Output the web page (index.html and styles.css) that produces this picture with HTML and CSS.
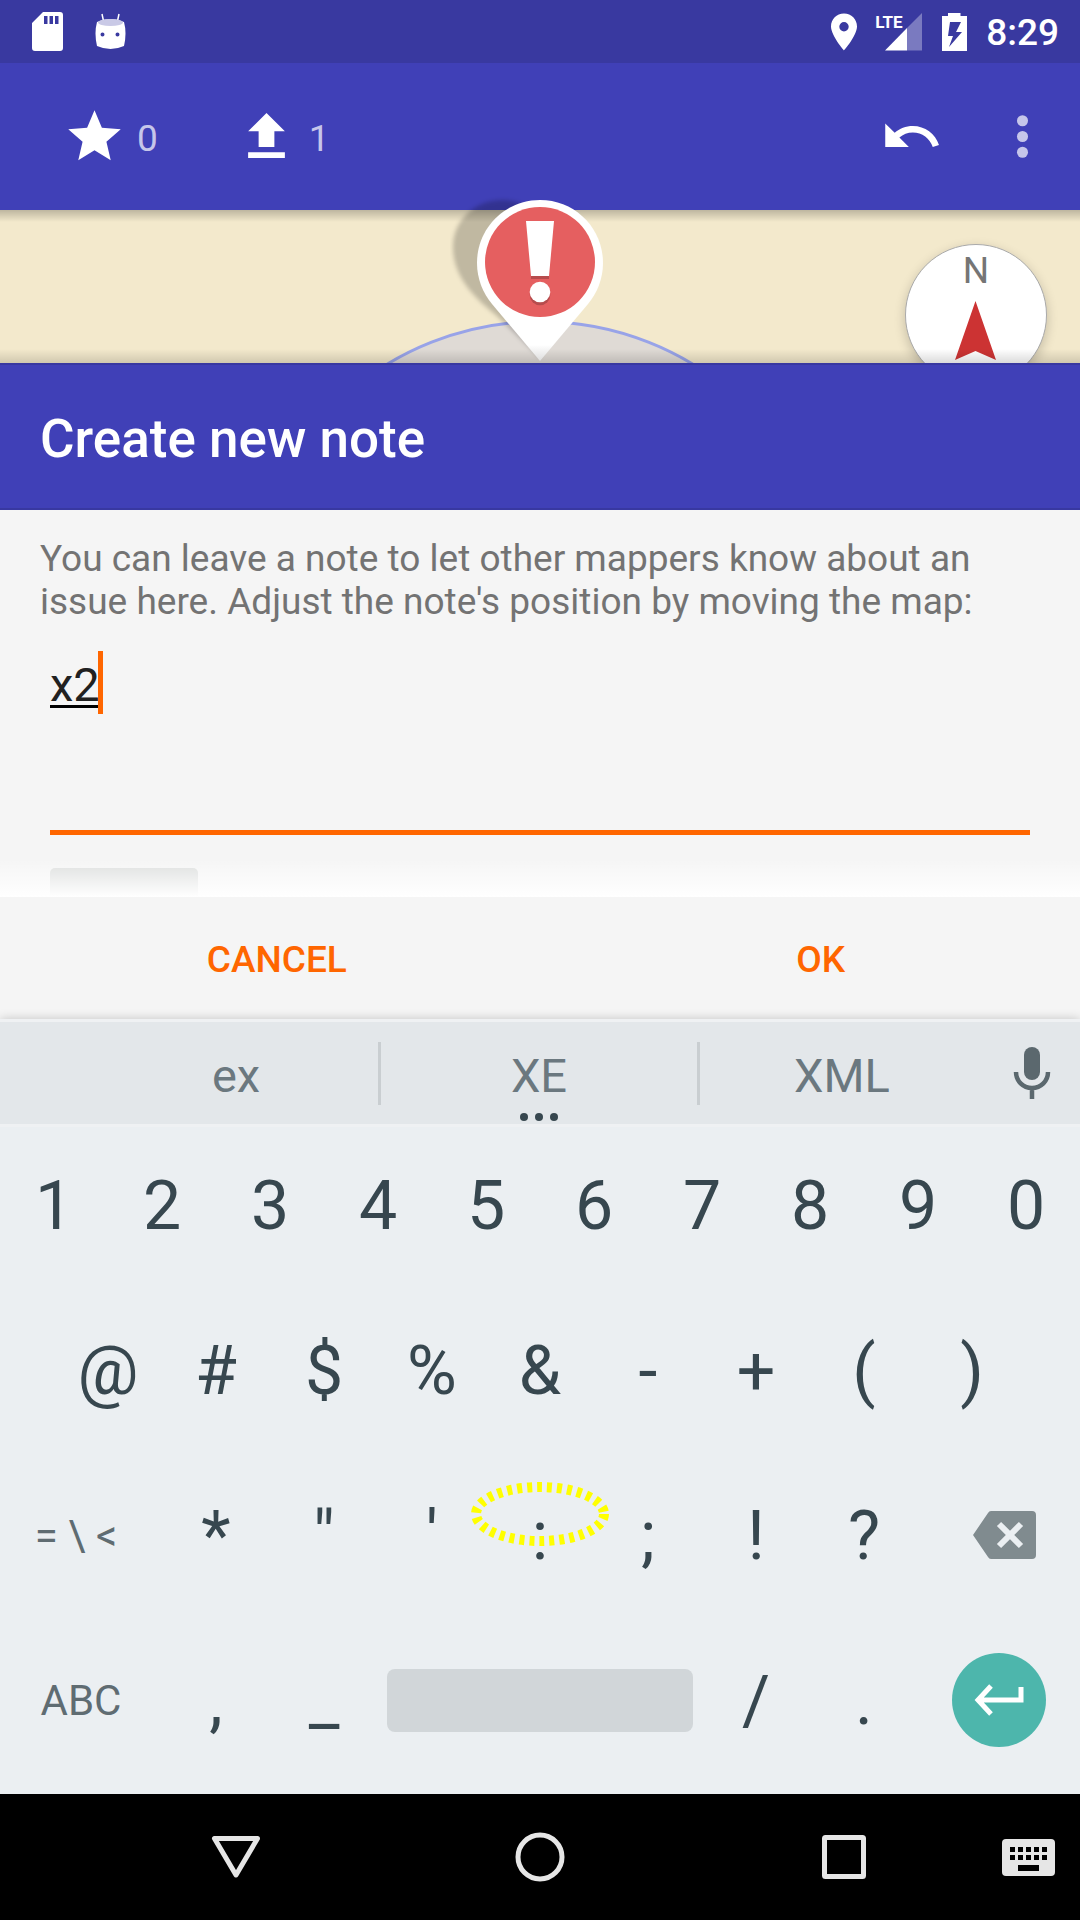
FILE: index.html
```html
<!DOCTYPE html>
<html lang="en">
<head>
<meta charset="utf-8">
<meta name="viewport" content="width=device-width, initial-scale=1">
<title>Create new note</title>
<link rel="stylesheet" href="styles.css">
</head>
<body>
<div class="screen">
  <header class="status">
    <div class="status-side">
      <svg viewBox="0 0 31 39" width="31" height="39" aria-hidden="true"><path fill="#fff" fill-rule="evenodd" d="M11 0h17q3 0 3 3v33q0 3-3 3H3q-3 0-3-3V11zM12 4v8h3.500V4zM17.500 4v8h3.500V4zM23 4v8h3.500V4z"/></svg>
      <svg viewBox="0 0 31 37" width="31" height="37" aria-hidden="true"><path stroke="#fff" stroke-width="1.500" d="M7 1l1.500 7M24 1l-1.500 7"/><path fill="#fff" fill-rule="evenodd" d="M2 9q13.500-6 27 0 3 11 0 24-13.500 6-27 0-3-13 0-24zM7.500 19.500a2 2 0 1 0 0 4 2 2 0 0 0 0-4zM22.500 19.500a2 2 0 1 0 0 4 2 2 0 0 0 0-4z"/><ellipse cx="15.500" cy="9.500" rx="12.500" ry="3.500" fill="#c9c9e6"/></svg>
    </div>
    <div class="status-side status-right">
      <svg viewBox="0 0 26 38" width="26" height="38" aria-hidden="true"><path fill="#fff" fill-rule="evenodd" d="M13 .5C5.500.5 0 6.200 0 13.500 0 22.500 13 37.500 13 37.500s13-15 13-24C26 6.200 20.500.5 13 .5zM13 9a4.700 4.700 0 1 1 0 9.400A4.700 4.700 0 0 1 13 9z"/></svg>
      <span class="network"><svg viewBox="0 0 46 38" width="46" height="38" aria-hidden="true"><path fill="#7a7ac0" d="M46 0v37.500H31V15z"/><path fill="#fff" d="M31 15v22.500H9z"/></svg><span class="lte">LTE</span></span>
      <svg viewBox="0 0 25 38" width="25" height="38" aria-hidden="true"><path fill="#fff" fill-rule="evenodd" d="M6 0h12.500v3H25v35H0V3h6zM8 9L6 23h5L7 34l13-15h-6l5-10z"/></svg>
      <time class="clock">8:29</time>
    </div>
  </header>

  <nav class="appbar" aria-label="App">
    <button class="counter" aria-label="Solved quests"><svg viewBox="0 0 24 24" class="icon" aria-hidden="true"><path d="M12 17.270L18.180 21l-1.640-7.030L22 9.240l-7.190-.61L12 2 9.190 8.630 2 9.240l5.460 4.730L5.820 21z"/></svg><span class="count">0</span></button>
    <button class="counter" aria-label="Upload"><svg viewBox="0 0 24 24" class="icon" aria-hidden="true"><path d="M9 16h6v-6h4l-7-7-7 7h4zM5 18h14v2.200H5z"/></svg><span class="count">1</span></button>
    <span class="spacer"></span>
    <button class="tool" aria-label="Undo"><svg viewBox="0 0 24 24" class="icon" aria-hidden="true"><path d="M12.500 8c-2.650 0-5.050.99-6.900 2.600L2 7v9h9l-3.620-3.620c1.390-1.160 3.160-1.880 5.120-1.880 3.540 0 6.550 2.310 7.600 5.500l2.370-.78C21.080 11.030 17.150 8 12.500 8z"/></svg></button>
    <button class="tool" aria-label="More options"><svg viewBox="0 0 24 24" class="icon icon-dim" aria-hidden="true"><circle cx="12" cy="6" r="2.100"/><circle cx="12" cy="12" r="2.100"/><circle cx="12" cy="18" r="2.100"/></svg></button>
  </nav>

  <main>
    <section class="map" aria-label="Map">
      <div class="map-view">
        <div class="accuracy"></div>
        <button class="compass" aria-label="Compass"><span class="north">N</span><svg viewBox="0 0 42 59" width="42" height="59" aria-hidden="true"><path fill="#c33" d="M20.500 0L41 59l-20.500-9L0 59z"/></svg></button>
      </div>
      <svg class="pin" viewBox="0 0 180 170" width="180" height="170" aria-hidden="true">
        <defs>
          <filter id="soft" x="-20%" y="-20%" width="140%" height="140%"><feGaussianBlur stdDeviation="2"/></filter>
          <linearGradient id="tip" x1="0" y1="0" x2="0" y2="1"><stop offset=".9" stop-color="#fff"/><stop offset="1" stop-color="#ddd"/></linearGradient>
        </defs>
        <path filter="url(#soft)" fill="#000" fill-opacity=".21" d="M52 5C25 5 3 25 3 52c0 31 23 52 43 68l44 43 10-100C99 30 84 5 52 5z"/>
        <path fill="url(#tip)" d="M90 5c-35 0-63 28-63 63 0 16 6 30 15 41l48 57 48-57c9-11 15-25 15-41 0-35-28-63-63-63z"/>
        <circle cx="90" cy="67" r="55" fill="#e55f60"/>
        <path fill="#b74c4d" d="M81 78h18v6H81z"/><circle cx="90" cy="100" r="10.300" fill="#b74c4d"/>
        <path fill="#fff" d="M76 26h28l-5 55H81z"/><circle cx="90" cy="97" r="10.300" fill="#fff"/>
      </svg>
    </section>

    <form class="dialog">
      <h1 class="title">Create new note</h1>
      <div class="content">
        <label class="message" for="note">You can leave a note to let other mappers know about an issue here. Adjust the note's position by moving the map:</label>
        <div class="field">
          <textarea class="note" id="note" spellcheck="false">x2</textarea>
          <span class="caret"></span>
        </div>
        <button class="attach" type="button" aria-label="Add photo"></button>
        <div class="fade"></div>
      </div>
      <div class="actions">
        <button class="action cancel" type="button">CANCEL</button>
        <button class="action" type="button">OK</button>
      </div>
    </form>
  </main>

  <section class="keyboard" aria-label="Keyboard">
    <div class="suggestions">
      <button class="word">ex</button>
      <button class="word word-main">XE<svg class="more" viewBox="0 0 40 8" width="40" height="8" aria-hidden="true"><circle cx="5" cy="4" r="4"/><circle cx="20" cy="4" r="4"/><circle cx="35" cy="4" r="4"/></svg></button>
      <button class="word">XML</button>
      <button class="mic" aria-label="Voice input"><svg viewBox="0 0 38 52" width="38" height="52" aria-hidden="true"><rect x="11" y="0" width="16" height="33" rx="8" fill="#5b686e"/><path fill="none" stroke="#5b686e" stroke-width="4.500" d="M3 25c0 9 7 16 16 16s16-7 16-16M19 41v11"/></svg></button>
    </div>
    <div class="keys">
      <div class="row">
        <button class="key">1</button><button class="key">2</button><button class="key">3</button><button class="key">4</button><button class="key">5</button><button class="key">6</button><button class="key">7</button><button class="key">8</button><button class="key">9</button><button class="key">0</button>
      </div>
      <div class="row">
        <button class="key key-inset">@</button><button class="key">#</button><button class="key">$</button><button class="key">%</button><button class="key">&amp;</button><button class="key">-</button><button class="key">+</button><button class="key">(</button><button class="key">)</button>
      </div>
      <div class="row">
        <button class="key key-wide key-symbols">= \ &lt;</button><button class="key">*</button><button class="key">"</button><button class="key">'</button><button class="key key-marked">:<svg class="marker" viewBox="0 0 140 64" width="140" height="64" aria-hidden="true"><ellipse cx="70" cy="32" rx="64" ry="27" fill="none" stroke="#ff0" stroke-width="10" stroke-dasharray="5 5"/></svg></button><button class="key">;</button><button class="key">!</button><button class="key">?</button>
        <button class="key key-wide key-delete" aria-label="Delete"><svg viewBox="0 0 63 48" width="63" height="48" aria-hidden="true"><path fill="#808b8f" d="M18 0h41q4 0 4 4v40q0 4-4 4H18q-2 0-3-2L0 24 15 2q1-2 3-2z"/><path stroke="#ebeff2" stroke-width="6" d="M26 13l22 22M48 13L26 35"/></svg></button>
      </div>
      <div class="row">
        <button class="key key-wide key-abc">ABC</button><button class="key">,</button><button class="key">_</button><button class="key key-space" aria-label="Space"><span class="bar"></span></button><button class="key">/</button><button class="key">.</button>
        <button class="key key-wide key-enter" aria-label="Enter"><span class="enter"><svg viewBox="0 0 50 32" width="50" height="32" aria-hidden="true"><path fill="none" stroke="#fff" stroke-width="5" d="M17 2L4 16l13 14M4 16h43V3"/></svg></span></button>
      </div>
    </div>
  </section>

  <nav class="system" aria-label="System">
    <button class="sys" aria-label="Back"><svg viewBox="0 0 50 44" width="50" height="44" aria-hidden="true"><path fill="none" stroke="#e6e6e6" stroke-width="5" stroke-linejoin="round" d="M3.500 3.500h43L25 40z"/></svg></button>
    <button class="sys" aria-label="Home"><svg viewBox="0 0 50 50" width="50" height="50" aria-hidden="true"><circle cx="25" cy="25" r="22" fill="none" stroke="#e6e6e6" stroke-width="5"/></svg></button>
    <button class="sys" aria-label="Recent apps"><svg viewBox="0 0 44 44" width="44" height="44" aria-hidden="true"><rect x="2.500" y="2.500" width="39" height="39" rx="1" fill="none" stroke="#e6e6e6" stroke-width="5"/></svg></button>
    <button class="sys sys-ime" aria-label="Choose keyboard"><svg viewBox="0 0 53 37" width="53" height="37" aria-hidden="true"><rect width="53" height="37" rx="4" fill="#e6e6e6"/><path stroke="#000" stroke-width="5" stroke-dasharray="5 3" d="M8 10.500h37.500M8 18.500h37.500"/><path fill="#000" d="M16 26h21v6H16z"/></svg></button>
  </nav>
</div>
</body>
</html>
```

FILE: styles.css
```css
* {
  box-sizing: border-box;
}

body {
  margin: 0;
  background: #000;
  font-family: Roboto, "Noto Sans", sans-serif;
  font-size: 37px;
}

button {
  display: flex;
  align-items: center;
  justify-content: center;
  margin: 0;
  padding: 0;
  border: 0;
  background: none;
  color: inherit;
  font: inherit;
}

svg {
  display: block;
  flex: none;
}

.screen {
  display: flex;
  flex-direction: column;
  min-height: 100vh;
  overflow: hidden;
}

/* Status bar */

.status {
  display: flex;
  justify-content: space-between;
  height: 63px;
  padding: 0 21px 0 32px;
  background: #3939a0;
  color: #fff;
}

.status-side {
  display: flex;
  align-items: center;
  gap: 32px;
}

.status-right {
  gap: 19px;
}

.network {
  position: relative;
  margin-right: 1px;
}

.lte {
  position: absolute;
  top: -1px;
  left: -1px;
  font-family: "Liberation Sans Narrow", Roboto, sans-serif;
  font-size: 17px;
  font-weight: 700;
  line-height: 20px;
}

.clock {
  padding-top: 2px;
  font-weight: 500;
}

/* App bar */

.appbar {
  display: flex;
  align-items: center;
  gap: 48px;
  height: 147px;
  padding: 0 26px 0 63px;
  background: #4040b7;
  color: #c6c6ea;
}

.counter {
  gap: 11px;
  margin-right: 29px;
}

.count {
  padding-top: 4px;
}

.spacer {
  flex: 1;
}

.icon {
  width: 63px;
  height: 63px;
  fill: #fff;
}

.icon-dim {
  fill: #c6c6ea;
}

/* Map */

.map {
  position: relative;
  height: 153px;
}

.map-view {
  position: relative;
  height: 100%;
  overflow: hidden;
  background: #f3e9cc;
}

.map-view::after {
  content: "";
  position: absolute;
  inset: 0;
  background:
    linear-gradient(rgba(0, 0, 0, 0.22), transparent) top / 100% 12px no-repeat,
    linear-gradient(transparent, rgba(0, 0, 0, 0.14)) bottom / 100% 14px no-repeat;
}

.accuracy {
  position: absolute;
  top: 110px;
  left: 50%;
  width: 592px;
  height: 592px;
  margin-left: -296px;
  border: 3px solid #98a3e8;
  border-radius: 50%;
  background: #dfdad5;
}

.compass {
  position: absolute;
  top: 34px;
  right: 33px;
  flex-direction: column;
  justify-content: flex-start;
  gap: 11px;
  width: 142px;
  height: 142px;
  padding-top: 7px;
  border: 1px solid #aaa;
  border-radius: 50%;
  background: #fff;
  box-shadow: 0 4px 12px rgba(0, 0, 0, 0.2);
  color: #757575;
}

.north {
  line-height: 38px;
}

.pin {
  position: absolute;
  bottom: -2px;
  left: 50%;
  margin-left: -90px;
}

/* Dialog */

.dialog {
  background: #f5f5f5;
}

.title {
  margin: 0;
  padding: 43px 40px 38px;
  border: solid #3838a1;
  border-width: 2px 0;
  background: #4040b7;
  color: #fff;
  font-size: 53px;
  font-weight: 500;
  line-height: 62px;
}

.content {
  position: relative;
  height: 387px;
  padding: 27px 40px 0;
  overflow: hidden;
}

.message {
  display: block;
  color: #737373;
  line-height: 43px;
}

.field {
  position: relative;
  margin: 28px 10px 33px;
}

.note {
  display: block;
  width: 100%;
  height: 184px;
  padding: 2px 0 0;
  border: 0;
  border-bottom: 5px solid #ff6600;
  border-radius: 0;
  outline: 0;
  resize: none;
  background: none;
  color: #212121;
  font: inherit;
  font-size: 47px;
  line-height: 63px;
  text-decoration: underline #000 3px;
  text-decoration-skip-ink: none;
  text-underline-offset: 4px;
}

.caret {
  position: absolute;
  top: 0;
  left: 48px;
  width: 5px;
  height: 63px;
  background: #ff6600;
}

.attach {
  width: 148px;
  height: 100px;
  margin-left: 10px;
  border-radius: 5px;
  background: #dcdedd;
}

.fade {
  position: absolute;
  inset: auto 0 0;
  height: 38px;
  background: linear-gradient(rgba(255, 255, 255, 0), #fff);
}

.actions {
  display: grid;
  grid-template-columns: 52% 48%;
  height: 122px;
}

.action {
  padding-top: 2px;
  color: #ff6600;
  font-weight: 500;
}

.cancel {
  padding-right: 8px;
}

/* Keyboard */

.keyboard {
  position: relative;
  flex: 1;
  background: #ebeff2;
  box-shadow: 0 0 10px rgba(0, 0, 0, 0.2);
}

.suggestions {
  display: grid;
  grid-template-columns: 15fr 17fr 15fr 96px;
  height: 108px;
  padding-left: 94px;
  border: solid #eff1f3;
  border-width: 3px 0;
  background: #e3e7ea;
}

.word {
  position: relative;
  padding-top: 4px;
  color: #6b787f;
  font-size: 47px;
}

.word-main {
  margin: 20px 0 19px;
  border: solid #c9ced1;
  border-width: 0 3px;
}

.more {
  position: absolute;
  bottom: -16px;
  fill: #37474f;
}

.keys {
  padding-bottom: 7px;
}

.row {
  display: grid;
  grid-template-columns: repeat(20, minmax(0, 1fr));
  height: 165px;
}

.key {
  grid-column-end: span 2;
  padding-bottom: 7px;
  color: #37474f;
  font-size: 68px;
}

.key-inset {
  grid-column-start: 2;
}

.key-wide {
  grid-column-end: span 3;
  color: #5f6c72;
}

.key-symbols,
.key-abc {
  padding-bottom: 9px;
  font-size: 42px;
}

.key-symbols {
  padding-right: 10px;
}

.key-space {
  grid-column-end: span 6;
  padding: 0 9px 9px;
}

.bar {
  flex: 1;
  height: 63px;
  border-radius: 8px;
  background: #d1d6d9;
}

.key-marked {
  position: relative;
}

.marker {
  position: absolute;
  top: 25px;
  left: 50%;
  margin-left: -70px;
}

.key-delete {
  padding: 0 0 9px 10px;
}

.key-enter {
  padding-bottom: 9px;
}

.enter {
  display: flex;
  align-items: center;
  justify-content: center;
  width: 94px;
  height: 94px;
  border-radius: 50%;
  background: #4db6ac;
}

/* System navigation */

.system {
  display: grid;
  grid-template-columns: 1fr 1fr 1fr 84px;
  height: 126px;
  padding-left: 84px;
  background: #000;
}

.sys-ime {
  padding-right: 20px;
}
```
